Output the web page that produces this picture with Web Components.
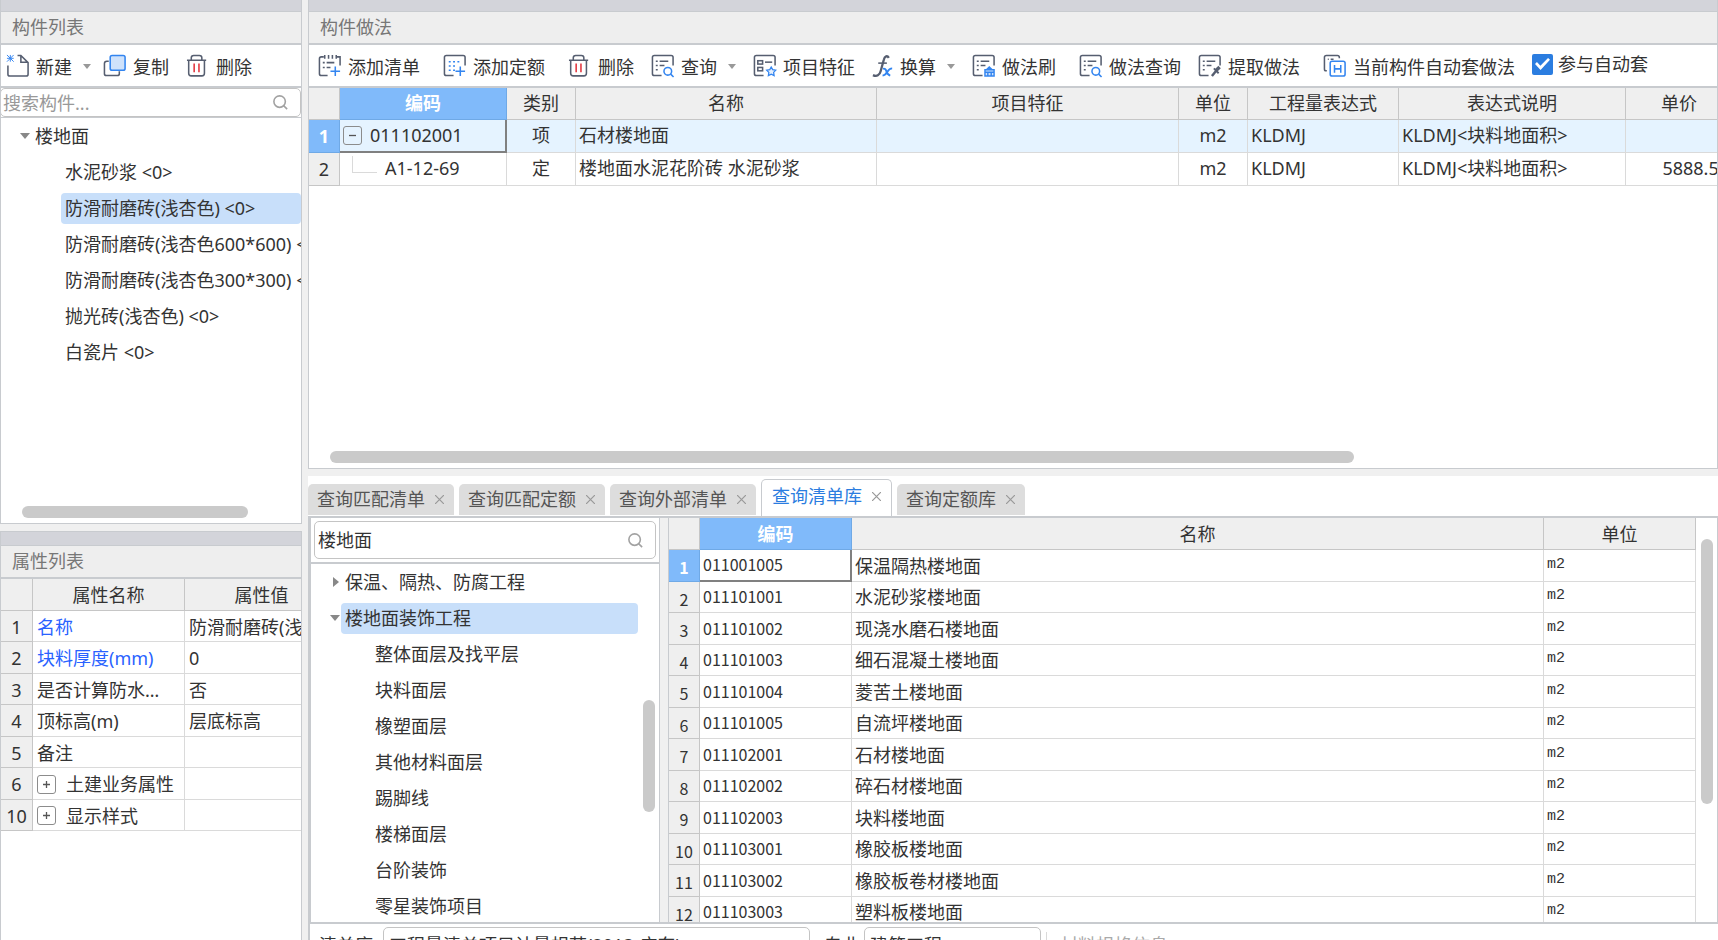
<!DOCTYPE html>
<html lang="zh-CN">
<head>
<meta charset="utf-8">
<title>构件做法</title>
<style>
  :root {
    --line: #c8cbcf;
    --cell: #dadada;
    --head: #efefef;
    --strip: #d3d4da;
    --accent: #2b7de0;
    --pick: #c8dffa;
    --hot: #80bafa;
  }
  html, body { height: 100%; }
  body {
    margin: 0;
    overflow: hidden;
    background: #f0f0f0;
    color: #333;
    font: 18px/24px "Noto Sans", "Noto Sans CJK SC", sans-serif;
  }
</style>
</head>
<body>
<work-space>
  <dock-panel slot="list" heading="构件列表">
    <tool-bar slot="tools" compact>
      <tool-button icon="new" menu tight>新建</tool-button>
      <tool-button icon="copy">复制</tool-button>
      <tool-button icon="trash">删除</tool-button>
    </tool-bar>
    <search-box flush placeholder="搜索构件..." label="搜索构件"></search-box>
    <tree-view>
      <tree-item level="0" state="open">楼地面</tree-item>
      <tree-item level="1">水泥砂浆 &lt;0&gt;</tree-item>
      <tree-item level="1" selected>防滑耐磨砖(浅杏色) &lt;0&gt;</tree-item>
      <tree-item level="1">防滑耐磨砖(浅杏色600*600) &lt;0&gt;</tree-item>
      <tree-item level="1">防滑耐磨砖(浅杏色300*300) &lt;0&gt;</tree-item>
      <tree-item level="1">抛光砖(浅杏色) &lt;0&gt;</tree-item>
      <tree-item level="1">白瓷片 &lt;0&gt;</tree-item>
    </tree-view>
    <scroll-thumb start="21" size="226"></scroll-thumb>
  </dock-panel>

  <dock-panel slot="props" heading="属性列表" thick>
    <property-grid></property-grid>
  </dock-panel>

  <dock-panel slot="method" heading="构件做法">
    <tool-bar slot="tools">
      <tool-button icon="addlist" wide>添加清单</tool-button>
      <tool-button icon="addquota" wide>添加定额</tool-button>
      <tool-button icon="trash">删除</tool-button>
      <tool-button icon="find" menu>查询</tool-button>
      <tool-button icon="feature">项目特征</tool-button>
      <tool-button icon="fx" menu>换算</tool-button>
      <tool-button icon="brush" wide>做法刷</tool-button>
      <tool-button icon="find">做法查询</tool-button>
      <tool-button icon="pick" wide>提取做法</tool-button>
      <tool-button icon="auto">当前构件自动套做法</tool-button>
      <check-option>参与自动套</check-option>
    </tool-bar>
    <method-grid></method-grid>
    <scroll-thumb start="21" size="1024"></scroll-thumb>
  </dock-panel>

  <query-panel slot="query">
    <query-tab slot="tabs">查询匹配清单</query-tab>
    <query-tab slot="tabs">查询匹配定额</query-tab>
    <query-tab slot="tabs">查询外部清单</query-tab>
    <query-tab slot="tabs" active>查询清单库</query-tab>
    <query-tab slot="tabs">查询定额库</query-tab>
    <search-box slot="search" value="楼地面" label="搜索清单"></search-box>
    <tree-view slot="tree">
      <tree-item level="0" state="closed">保温、隔热、防腐工程</tree-item>
      <tree-item level="0" state="open" selected>楼地面装饰工程</tree-item>
      <tree-item level="1">整体面层及找平层</tree-item>
      <tree-item level="1">块料面层</tree-item>
      <tree-item level="1">橡塑面层</tree-item>
      <tree-item level="1">其他材料面层</tree-item>
      <tree-item level="1">踢脚线</tree-item>
      <tree-item level="1">楼梯面层</tree-item>
      <tree-item level="1">台阶装饰</tree-item>
      <tree-item level="1">零星装饰项目</tree-item>
    </tree-view>
    <library-grid slot="grid"></library-grid>
  </query-panel>
</work-space>

<script>
/* Attaches an open shadow root holding the given markup. */
const render = (el, html) => { el.attachShadow({ mode: "open" }).innerHTML = html; };

customElements.define("work-space", class extends HTMLElement {
  constructor() {
    super();
    render(this, `<style>
      :host { display: grid; grid-template-columns: 302px minmax(0, 1fr); gap: 6px; height: 100vh; }
      .side, .main { display: flex; flex-direction: column; min-width: 0; min-height: 0; gap: 7px; }
      ::slotted([slot=list]) { flex: 0 0 524px; }
      ::slotted([slot=props]) { flex: 1; min-height: 0; }
      ::slotted([slot=method]) { flex: 0 0 469px; }
      ::slotted([slot=query]) { flex: 1; min-height: 0; }
    </style>
    <div class="side"><slot name="list"></slot><slot name="props"></slot></div>
    <div class="main"><slot name="method"></slot><slot name="query"></slot></div>`);
  }
});

customElements.define("dock-panel", class extends HTMLElement {
  constructor() {
    super();
    render(this, `<style>
      :host { display: flex; flex-direction: column; overflow: hidden; box-sizing: border-box;
              background: #fff; border: solid var(--line); border-width: 0 1px 1px; }
      :host([thick]) { border-bottom: 0; }
      .strip { flex: none; height: 11px; background: var(--strip); border-bottom: 1px solid var(--line); }
      :host([thick]) .strip { height: 13px; border-top: 1px solid var(--line); }
      h2 { flex: none; margin: 0; padding: 3px 11px 4px; background: #eee; color: #777;
           font-size: 18px; font-weight: 400; line-height: 24px; border-bottom: 2px solid var(--line); }
      .body { flex: 1; min-height: 0; display: flex; flex-direction: column; overflow: hidden; }
    </style>
    <div class="strip"></div><h2></h2>
    <slot name="tools"></slot>
    <div class="body"><slot></slot></div>`);
    this.shadowRoot.querySelector("h2").textContent = this.getAttribute("heading");
  }
});

customElements.define("tool-bar", class extends HTMLElement {
  constructor() {
    super();
    render(this, `<style>
      :host { display: flex; flex: none; align-items: center; height: 41px; padding-left: 9px;
              white-space: nowrap; border-bottom: 2px solid var(--line); overflow: hidden; }
      :host([compact]) { padding-left: 5px; }
    </style><slot></slot>`);
  }
});

const LIST = `<path d="M23 12V3.5Q23 1.5 21 1.5H3.500Q1.500 1.500 1.500 3.500V20.500Q1.500 22.500 3.500 22.500H11"/>`;
const ROWS = `<path d="M5 7.500h2M9 7.500h9M5 12h2M9 12h5M5 16.500h2"/>`;
const ICONS = {
  new: `<path d="M2 12V21Q2 23 4 23H21Q23 23 23 21V9L15.500 1.500H12M15.500 2V8.500H22.500"/>
        <path class="b" d="M1 1l7 7M8 1l-7 7M4.500 1v7M1 4.500h7" stroke-width="1"/>`,
  copy: `<path d="M6 7.500H4Q1.500 7.500 1.500 10V20.500Q1.500 22.500 3.500 22.500H15Q17 22.500 17 20.500V18"/>
        <rect class="b" x="7.500" y="1.500" width="15.500" height="15.500" rx="2" style="fill:#cfe2fb"/>`,
  trash: `<path d="M1 6.500h20M5.500 6V4Q5.500 1.500 8 1.500h6Q16.500 1.500 16.500 4V6M2.800 7V20Q2.800 22.800 5.500 22.800H16.500Q19.200 22.800 19.200 20V7"/>
        <path d="M8.500 10v9M13.500 10v9" style="stroke:#e2323c"/>`,
  addlist: `<path d="M6 3H3.500Q1.500 3 1.500 5V20.500Q1.500 22.500 3.500 22.500H10M7 1v4M11 1v4M15 1v4M19 1v4M19 3h4V12"/>
        <path d="M5 9h2M9 9h8M5 14h2M9 14h4"/><path class="b" d="M18 13v10M13 18h10"/>`,
  addquota: `${LIST}<path class="b" d="M6 8h2M10.500 8h2M15 8h2M6 12.500h2M10.500 12.500h2M6 17h2M10.500 17h2"/>
        <path class="b" d="M18 13v10M13 18h10"/>`,
  find: `${LIST}${ROWS}<circle class="b" cx="17.500" cy="18" r="4"/><path class="b" d="M20.500 21L23.500 24"/>`,
  feature: `${LIST}<rect x="5" y="7" width="5" height="3.500"/><rect x="5" y="14" width="5" height="3.500"/><path d="M12.500 8.500H20"/>
        <path class="b" style="fill:#e4effd" stroke-width="1.300" d="M19 13.500l1.500 2.800 3.300.5-2.300 2.400.5 3.300-3-1.500-3 1.500.5-3.300-2.300-2.400 3.300-.5z"/>`,
  fx: `<path stroke-width="2.400" d="M17.500 4C16 1.200 13.200 2 12.300 6L9 18C8 22 5 24 1 22"/><path d="M6.500 9.500h9"/>
        <path class="b" stroke-width="2" d="M11.500 15.500q2.500-1 3.500 2.500t4 4.500M21 15q-3 0-5 3.500t-5 4"/>`,
  brush: `${LIST}${ROWS}<path class="b" style="fill:#cfe2fb" stroke-width="1.500" d="M18 13v3M15 16.500l3-3 3 3M13.500 16.500h9.500v6.500h-9.500zM13 19h10.500M16.500 19v4M20 19v4"/>`,
  pick: `${LIST}${ROWS}<path stroke-width="3.600" d="M22.500 13.500l-4 4"/><path stroke-width="2" d="M16.500 15l5 5"/><path stroke-width="2.600" d="M19 17.500l-4.500 5.500"/>`,
  auto: `<path d="M4 17.500H3Q1.500 17.500 1.500 15.500V3.500Q1.500 1.500 3.500 1.500H15Q17 1.500 17 3.500V4.500M5 5.500h1M8 5.500h3"/>
        <rect class="b" x="7.500" y="7.500" width="15.500" height="15.500" rx="2"/><path class="b" d="M12 11.500v8M18.500 11.500v8M12 15.500h6.500"/>`
};

customElements.define("tool-button", class extends HTMLElement {
  constructor() {
    super();
    render(this, `<style>
      :host { display: block; flex: none; margin-right: 17px; }
      :host([wide]) { margin-right: 23px; }
      :host([tight]) { margin-right: 12px; }
      button { display: flex; align-items: center; padding: 0; border: 0; background: none;
               color: inherit; font: inherit; line-height: 24px; }
      svg { width: 24px; height: 24px; margin-right: 6px; fill: none; stroke: #565e70; stroke-width: 1.6; }
      :host([icon=fx]) svg { margin-right: 4px; }
      .b { stroke: #3385f0; }
      span { padding-top: 2px; }
      i { display: none; margin: 2px 0 0 11px; border: 4px solid transparent; border-top: 5px solid #999; border-bottom: 0; }
      :host([menu]) i { display: block; }
    </style>
    <button type="button"><svg viewBox="0 0 25 25" aria-hidden="true">${ICONS[this.getAttribute("icon")]}</svg><span><slot></slot></span><i></i></button>`);
  }
});

customElements.define("check-option", class extends HTMLElement {
  constructor() {
    super();
    render(this, `<style>
      :host { display: block; flex: none; }
      label { display: flex; align-items: center; gap: 5px; padding-bottom: 3px; }
      input { appearance: none; width: 21px; height: 21px; margin: 0; border-radius: 2px; background: var(--accent);
              display: grid; place-items: center; }
      input:checked::before { content: ""; width: 15px; height: 12px; background: #fff;
              clip-path: polygon(0 50%, 13% 34%, 36% 64%, 87% 0, 100% 14%, 37% 100%); }
    </style><label><input type="checkbox" checked><slot></slot></label>`);
  }
});

customElements.define("search-box", class extends HTMLElement {
  constructor() {
    super();
    render(this, `<style>
      :host { display: block; flex: none; padding: 3px; border-bottom: 2px solid var(--line); }
      :host([flush]) { padding: 0; border-bottom-width: 1px; }
      label { display: flex; align-items: center; height: 36px; padding: 0 12px 0 3px; border: 1px solid #c4c4c4;
              border-radius: 5px; background: #fff; }
      :host([flush]) label { height: 27px; margin-left: -1px; padding-left: 2px; }
      input { flex: 1; min-width: 0; padding: 0; border: 0; outline: 0; background: none; color: inherit; font: inherit; }
      input::placeholder { color: #999; opacity: 1; }
      svg { width: 15px; height: 15px; fill: none; stroke: #a2a2a2; stroke-width: 1.8; }
    </style>
    <label><input type="text"><svg viewBox="0 0 17 17" aria-hidden="true"><circle cx="7.500" cy="7.500" r="6.500"/><path d="M12 12l4 4"/></svg></label>`);
    const input = this.shadowRoot.querySelector("input");
    input.placeholder = this.getAttribute("placeholder") || "";
    input.value = this.getAttribute("value") || "";
    input.setAttribute("aria-label", this.getAttribute("label"));
  }
});

customElements.define("tree-view", class extends HTMLElement {
  constructor() {
    super();
    render(this, `<style>
      :host { display: block; flex: 1; min-height: 0; overflow: hidden; }
    </style><div role="tree"><slot></slot></div>`);
  }
});

customElements.define("tree-item", class extends HTMLElement {
  constructor() {
    super();
    render(this, `<style>
      :host { display: flex; align-items: center; height: 36px; padding-left: 19px; white-space: nowrap; }
      :host([level="1"]) { padding-left: 49px; }
      i { flex: none; width: 0; height: 0; margin-right: 1px; border: 5px solid transparent; }
      :host([state=open]) i { border-top: 6px solid #888; border-bottom: 0; }
      :host([state=closed]) i { border-left: 6px solid #888; border-right: 0; margin-left: 3px; margin-right: 2px; }
      span { flex: 1; padding: 3px 0 4px 4px; border-radius: 4px; line-height: 24px; overflow: hidden; }
      :host([selected]) span { background: var(--pick); }
    </style><i></i><span role="treeitem"><slot></slot></span>`);
  }
});

customElements.define("scroll-thumb", class extends HTMLElement {
  constructor() {
    super();
    render(this, `<style>
      :host { display: block; flex: none; padding: 5px 0; }
      div { height: 12px; border-radius: 6px; background: #cacaca; max-width: calc(100% - 30px); }
    </style><div></div>`);
    const bar = this.shadowRoot.querySelector("div").style;
    bar.marginLeft = this.getAttribute("start") + "px";
    bar.width = this.getAttribute("size") + "px";
  }
});

customElements.define("query-tab", class extends HTMLElement {
  constructor() {
    super();
    render(this, `<style>
      :host { display: flex; align-items: center; gap: 10px; padding: 3px 10px 4px 9px; margin-bottom: 1px;
              border-radius: 5px 5px 0 0; background: #ddd; color: #555; white-space: nowrap; }
      :host([active]) { padding: 4px 10px 8px; margin-bottom: 0; background: #fff; color: var(--accent);
              border: 1px solid var(--line); border-bottom: 0; }
      button { padding: 0; border: 0; background: none; display: flex; }
      button.name { color: inherit; font: inherit; }
      svg { width: 9px; height: 9px; stroke: #999; stroke-width: 1.200; }
    </style>
    <button class="name" type="button" role="tab"><slot></slot></button>
    <button type="button" aria-label="关闭"><svg viewBox="0 0 9 9"><path d="M0 0L9 9M9 0L0 9"/></svg></button>`);
  }
});

customElements.define("query-panel", class extends HTMLElement {
  constructor() {
    super();
    render(this, `<style>
      :host { display: flex; flex-direction: column; overflow: hidden; background: #fff; }
      .tabs { flex: none; display: flex; align-items: flex-end; gap: 5px; height: 40px; border-bottom: 2px solid var(--line); }
      .body { flex: 1; min-height: 0; display: grid; grid-template-columns: 352px minmax(0, 1fr); gap: 8px; background: #f0f0f0; }
      .left, .right { display: flex; min-height: 0; background: #fff; border: 1px solid var(--line); border-width: 0 1px; overflow: hidden; }
      .left { flex-direction: column; border-left-width: 3px; }
      .list { flex: 1; min-height: 0; display: flex; }
      .track { flex: none; width: 12px; margin: 0 4px 0 5px; }
      .track::before { content: ""; display: block; height: 112px; margin-top: 136px; border-radius: 6px; background: #cacaca; }
      .right .track::before { height: 265px; margin-top: 21px; }
      ::slotted([slot=grid]) { flex: 1; min-width: 0; }
      .foot { flex: none; display: flex; align-items: flex-start; height: 13px; overflow: hidden; padding: 3px 0 0 9px;
              border-top: 2px solid var(--line); border-left: 2px solid var(--line); white-space: nowrap; }
      label { padding: 6px 0 0; width: 64px; }
      label.kind { width: 40px; margin-left: 14px; }
      select { appearance: none; box-sizing: border-box; width: 427px; height: 36px; padding: 0 5px; border: 1px solid #c4c4c4;
               border-radius: 5px; background: #fff; color: inherit; font: inherit; }
      select.kind { width: 177px; }
      .note { margin: 5px 0 0 5px; padding: 1px 0 0 13px; border-left: 1px solid var(--cell); color: #aaa; }
    </style>
    <div class="tabs" role="tablist"><slot name="tabs"></slot></div>
    <div class="body">
      <div class="left"><slot name="search"></slot><div class="list"><slot name="tree"></slot><div class="track"></div></div></div>
      <div class="right"><slot name="grid"></slot><div class="track"></div></div>
    </div>
    <div class="foot">
      <label for="lib">清单库:</label><select id="lib"><option>工程量清单项目计量规范(2013-广东)</option></select>
      <label class="kind" for="kind">专业:</label><select class="kind" id="kind"><option>建筑工程</option></select>
      <span class="note">材料规格信息</span>
    </div>`);
  }
});

/* Shared base of the three grids: subclasses give columns, head cells, rows and extra rules. */
class BaseGrid extends HTMLElement {
  constructor() {
    super();
    const cols = this.cols.map(w => `<col${w ? ` style="width:${w}px"` : ""}>`).join("");
    const head = this.head.map((t, i) => `<th${i === this.hot ? ' class="hot"' : ""}>${t}</th>`).join("");
    const rows = this.rows.map(r => `<tr>${r.map((t, i) => i ? `<td>${t}</td>` : `<th scope="row">${t}</th>`).join("")}</tr>`).join("");
    render(this, `<style>
      :host { display: block; flex: 1; min-height: 0; overflow: hidden; }
      table { table-layout: fixed; border-collapse: separate; border-spacing: 0; width: 100%; }
      th, td { box-sizing: border-box; padding: 0; overflow: hidden; white-space: nowrap; font-weight: 400; line-height: 24px;
               border: solid var(--cell); border-width: 0 1px 1px 0; }
      th { background: var(--head); border-color: #c6c6c6; }
      td { padding: 0 4px; text-align: left; text-overflow: ellipsis; }
      th.hot { background: var(--hot); border-color: #6fa9e6; color: #fff; font-weight: 700; }
      tr { height: 32px; }
      .node { display: flex; align-items: center; }
      .box { display: grid; place-items: center; flex: none; box-sizing: border-box; width: 19px; height: 19px; padding: 0;
             border: 1px solid #8c8c8c; border-radius: 3px; background: none; }
      .box svg { width: 9px; height: 9px; stroke: #555; stroke-width: 1.300; }
      ${this.rules}
    </style>
    <table><colgroup>${cols}</colgroup><thead><tr>${head}</tr></thead><tbody>${rows}</tbody></table>`);
  }
}
const MINUS = `<button class="box" type="button" aria-label="折叠"><svg viewBox="0 0 9 9"><path d="M1 4.500h7"/></svg></button>`;
const PLUS = `<button class="box" type="button" aria-label="展开"><svg viewBox="0 0 9 9"><path d="M1 4.500h7M4.500 1v7"/></svg></button>`;
const node = (mark, text) => `<div class="node">${mark}<span>${text}</span></div>`;

customElements.define("method-grid", class extends BaseGrid {
  get cols() { return [31, 167, 69, 301, 302, 69, 151, 227, 107]; }
  get hot() { return 1; }
  get head() { return ["", "编码", "类别", "名称", "项目特征", "单位", "工程量表达式", "表达式说明", "单价"]; }
  get rows() {
    return [
      ["1", node(MINUS, "011102001"), "项", "石材楼地面", "", "m2", "KLDMJ", "KLDMJ&lt;块料地面积&gt;", ""],
      ["2", node("<i></i>", "A1-12-69"), "定", "楼地面水泥花阶砖 水泥砂浆", "", "m2", "KLDMJ", "KLDMJ&lt;块料地面积&gt;", "5888.56"]
    ];
  }
  get rules() {
    return `
      table { width: 1424px; }
      thead th { padding-bottom: 1px; }
      tbody tr { height: 33px; }
      td { padding: 0 3px 2px; }
      td:nth-child(3), td:nth-child(6) { text-align: center; }
      td:last-child { text-align: right; text-overflow: clip; }
      .node span { margin-left: 8px; }
      tbody tr:first-child td { background: #e5f3ff; }
      tbody tr:first-child th { background: var(--hot); border-color: #6fa9e6; color: #fff; font-weight: 700; }
      tbody tr:first-child td:nth-child(2) { border-right: 2px solid #808080; border-bottom: 2px solid #808080; }
      tbody tr:first-child .node { padding-top: 1px; }
      i { flex: none; box-sizing: border-box; width: 25px; height: 17px; margin: 0 0 8px 9px;
          border: solid var(--cell); border-width: 0 0 1px 1px; }`;
  }
});

customElements.define("property-grid", class extends BaseGrid {
  get cols() { return [32, 152, 154]; }
  get hot() { return -1; }
  get head() { return ["", "属性名称", "属性值"]; }
  get rows() {
    return [
      ["1", "<b>名称</b>", "防滑耐磨砖(浅杏色)"],
      ["2", "<b>块料厚度(mm)</b>", "0"],
      ["3", "是否计算防水面积", "否"],
      ["4", "顶标高(m)", "层底标高"],
      ["5", "备注", ""],
      ["6", node(PLUS, "土建业务属性"), ""],
      ["10", node(PLUS, "显示样式"), ""]
    ];
  }
  get rules() {
    return `
      table { width: 338px; }
      tbody tr:nth-child(odd) { height: 31px; }
      tbody th { padding-top: 1px; }
      td { padding: 1px 0 0 4px; text-overflow: clip; }
      tbody tr:nth-child(3) td { text-overflow: ellipsis; padding-right: 20px; }
      b { font-weight: 400; color: #2962ff; }
      .node span { margin-left: 10px; }`;
  }
});

customElements.define("library-grid", class extends BaseGrid {
  get cols() { return [31, 152, 0, 152]; }
  get hot() { return 1; }
  get head() { return ["", "编码", "名称", "单位"]; }
  get rows() {
    return [
      ["011001005", "保温隔热楼地面"], ["011101001", "水泥砂浆楼地面"], ["011101002", "现浇水磨石楼地面"],
      ["011101003", "细石混凝土楼地面"], ["011101004", "菱苦土楼地面"], ["011101005", "自流坪楼地面"],
      ["011102001", "石材楼地面"], ["011102002", "碎石材楼地面"], ["011102003", "块料楼地面"],
      ["011103001", "橡胶板楼地面"], ["011103002", "橡胶板卷材楼地面"], ["011103003", "塑料板楼地面"]
    ].map(([code, name], i) => [String(i + 1), code, name, "m2"]);
  }
  get rules() {
    return `
      tbody tr:nth-child(even) { height: 31px; }
      tbody th, td { font-family: "Noto Sans CJK SC", sans-serif; font-size: 16px; }
      tbody th { padding-top: 3px; }
      td { padding: 0 3px 2px; }
      td:nth-child(3) { font-size: 18px; }
      td:nth-child(4) { font-family: "Liberation Mono", monospace; font-size: 15px; }
      tbody tr:first-child th { background: var(--hot); border-color: #6fa9e6; color: #fff; font-weight: 700; }
      tbody tr:first-child td:nth-child(2) { border-right: 2px solid #808080; border-bottom: 2px solid #808080; }`;
  }
});
</script>
</body>
</html>
